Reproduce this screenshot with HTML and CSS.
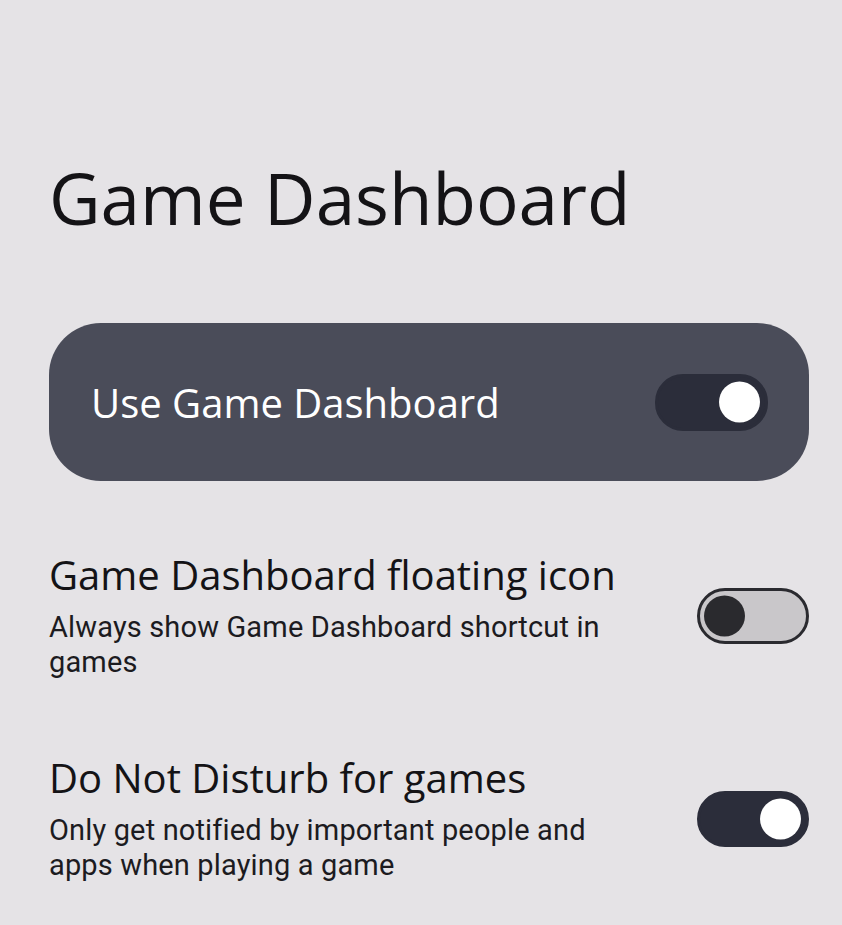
FILE: index.html
```html
<!DOCTYPE html>
<html lang="en">
<head>
    <meta charset="UTF-8">
    <meta name="viewport" content="width=device-width, initial-scale=1.0">
    <title>Game Dashboard</title>
    <link rel="stylesheet" href="styles.css">
</head>
<body>
    <main class="settings-page">
        <h1 class="page-title">Game Dashboard</h1>

        <!-- Main on/off switch for the feature -->
        <section class="main-switch">
            <span class="main-switch-label">Use Game Dashboard</span>
            <button class="toggle toggle-on toggle-in-card" role="switch" aria-checked="true" aria-label="Use Game Dashboard">
                <span class="toggle-thumb"></span>
            </button>
        </section>

        <div class="setting-row">
            <div class="setting-text">
                <h2 class="setting-title">Game Dashboard floating icon</h2>
                <p class="setting-summary">Always show Game Dashboard shortcut in games</p>
            </div>
            <button class="toggle toggle-off" role="switch" aria-checked="false" aria-label="Game Dashboard floating icon">
                <span class="toggle-thumb"></span>
            </button>
        </div>

        <div class="setting-row">
            <div class="setting-text">
                <h2 class="setting-title">Do Not Disturb for games</h2>
                <p class="setting-summary">Only get notified by important people and apps when playing a game</p>
            </div>
            <button class="toggle toggle-on" role="switch" aria-checked="true" aria-label="Do Not Disturb for games">
                <span class="toggle-thumb"></span>
            </button>
        </div>
    </main>
</body>
</html>
```

FILE: styles.css
```css
body {
    margin: 0;
    background-color: #e5e3e6;
    color: #141316;
    font-family: "Open Sans", sans-serif;
}

.settings-page {
    padding: 0 33px 0 49px;
}

.page-title {
    margin: 154px 0 0 0;
    font-size: 71px;
    line-height: 88px;
    font-weight: 400;
}

/* Big pill-shaped card holding the master switch */
.main-switch {
    display: flex;
    align-items: center;
    justify-content: space-between;
    height: 158px;
    margin-top: 81px;
    padding: 0 41px 0 42px;
    box-sizing: border-box;
    background-color: #4a4c59;
    border-radius: 52px;
}

.main-switch-label {
    color: #ffffff;
    font-size: 40px;
}

.setting-row {
    display: flex;
    align-items: center;
    justify-content: space-between;
    gap: 40px;
    margin-top: 70px;
}

.setting-row + .setting-row {
    margin-top: 74px;
}

.setting-text {
    max-width: 600px;
}

.setting-title {
    margin: 0 0 11px 0;
    font-size: 40px;
    line-height: 48px;
    font-weight: 400;
}

.setting-summary {
    margin: 0;
    font-family: Roboto, sans-serif;
    font-size: 29px;
    line-height: 35px;
    letter-spacing: 0.15px;
    color: #1c1b1f;
}

/* Switches */
.toggle {
    position: relative;
    flex-shrink: 0;
    width: 112px;
    height: 56px;
    padding: 0;
    border: 3px solid #2a2a2f;
    border-radius: 28px;
    box-sizing: border-box;
    cursor: pointer;
}

.toggle-thumb {
    position: absolute;
    top: 50%;
    width: 41px;
    height: 41px;
    border-radius: 50%;
    transform: translateY(-50%);
}

.toggle-on {
    background-color: #2b2d3a;
    border-color: #2b2d3a;
}

.toggle-on .toggle-thumb {
    right: 5px;
    background-color: #ffffff;
}

.toggle-in-card {
    width: 113px;
    height: 57px;
}

.toggle-off {
    background-color: #c9c7ca;
}

.toggle-off .toggle-thumb {
    left: 4px;
    background-color: #2a2a2e;
}
```
